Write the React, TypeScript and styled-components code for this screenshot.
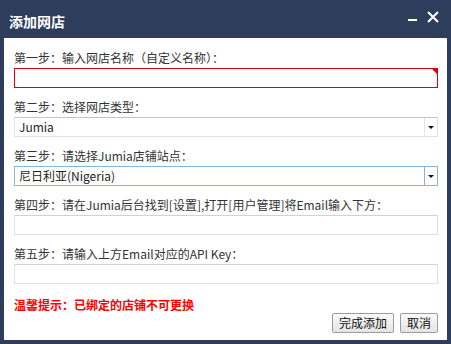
import React from 'react';
import styled, { createGlobalStyle } from 'styled-components';

const GlobalStyle = createGlobalStyle`
  html, body {
    margin: 0;
    padding: 0;
    background: #ffffff;
  }
  body {
    font-family: "Noto Sans CJK SC", "Noto Sans", sans-serif;
  }
`;

const Dialog = styled.div`
  width: 451px;
  height: 344px;
  box-sizing: border-box;
  background: #2e3d5b;
  padding: 0 4px 4px 4px;
  display: flex;
  flex-direction: column;
`;

const TitleBar = styled.div`
  height: 38px;
  display: flex;
  align-items: center;
  justify-content: space-between;
  padding: 0 8px 0 5px;
  color: #ffffff;
`;

const Title = styled.div`
  font-size: 14px;
  font-weight: bold;
  line-height: 18px;
  padding-top: 3px;
`;

const TitleTools = styled.div`
  display: flex;
  align-items: center;
  gap: 9px;
  margin-top: -4px;
`;

const ToolButton = styled.span`
  display: flex;
  align-items: center;
  justify-content: center;
  cursor: pointer;
`;

const Body = styled.div`
  flex: 1;
  background: #ffffff;
  padding: 11px 9px 0 10px;
  display: flex;
  flex-direction: column;
`;

const Field = styled.div`
  display: flex;
  flex-direction: column;
  margin-bottom: 10px;
`;

const Label = styled.div`
  font-size: 12px;
  line-height: 18px;
  color: #333333;
  margin-bottom: 1px;
`;

const TextBox = styled.div<{ $error?: boolean }>`
  position: relative;
  height: 20px;
  box-sizing: border-box;
  border: 1px solid ${({ $error }) => ($error ? '#d9000d' : '#dde1e6')};
  border-top-color: ${({ $error }) => ($error ? '#d9000d' : '#cfd3d8')};
  background: #ffffff;
`;

const ErrorMark = styled.span`
  position: absolute;
  top: 0;
  right: 0;
  width: 0;
  height: 0;
  border-style: solid;
  border-width: 0 5px 5px 0;
  border-color: transparent #e0000e transparent transparent;
`;

const Combo = styled.div<{ $active?: boolean }>`
  height: 20px;
  box-sizing: border-box;
  display: flex;
  border: 1px solid ${({ $active }) => ($active ? '#85b7d9' : '#dfe2e7')};
  border-top-color: ${({ $active }) => ($active ? '#85b7d9' : '#c4c4c4')};
  background: #ffffff;
`;

const ComboText = styled.div`
  flex: 1;
  font-size: 12px;
  line-height: 18px;
  color: #222222;
  padding-left: 4px;
`;

const ComboArrow = styled.div<{ $active?: boolean }>`
  width: 12px;
  border-left: 1px solid ${({ $active }) => ($active ? '#85b7d9' : '#e2e2e2')};
  display: flex;
  align-items: center;
  justify-content: center;

  &::after {
    content: '';
    width: 0;
    height: 0;
    border-style: solid;
    border-width: 3px 3px 0 3px;
    border-color: #111111 transparent transparent transparent;
  }
`;

const Warning = styled.div`
  font-size: 12px;
  font-weight: bold;
  line-height: 16px;
  color: #ff0000;
  padding-top: 3px;
`;

const Actions = styled.div`
  display: flex;
  justify-content: flex-end;
  gap: 6px;
`;

const Button = styled.button`
  height: 20px;
  box-sizing: border-box;
  padding: 0 6px;
  font-family: "Noto Sans CJK SC", "Noto Sans", sans-serif;
  font-size: 12px;
  line-height: 16px;
  color: #111111;
  border: 1px solid #9c9c9c;
  border-radius: 2px;
  background: linear-gradient(#fafafa, #e4e4e4);
  cursor: pointer;
`;

const MinimizeIcon = () => (
  <svg width="10" height="10" viewBox="0 0 10 10">
    <rect x="0" y="7" width="9" height="2" fill="#ffffff" />
  </svg>
);

const CloseIcon = () => (
  <svg width="12" height="12" viewBox="0 0 12 12">
    <path d="M1 1 L11 11 M11 1 L1 11" stroke="#ffffff" strokeWidth="2" />
  </svg>
);

const App: React.FC = () => {
  return (
    <>
      <GlobalStyle />
      <Dialog>
        <TitleBar>
          <Title>添加网店</Title>
          <TitleTools>
            <ToolButton><MinimizeIcon /></ToolButton>
            <ToolButton><CloseIcon /></ToolButton>
          </TitleTools>
        </TitleBar>
        <Body>
          <Field>
            <Label>第一步：输入网店名称（自定义名称）：</Label>
            <TextBox $error>
              <ErrorMark />
            </TextBox>
          </Field>
          <Field>
            <Label>第二步：选择网店类型：</Label>
            <Combo>
              <ComboText>Jumia</ComboText>
              <ComboArrow />
            </Combo>
          </Field>
          <Field>
            <Label>第三步：请选择Jumia店铺站点：</Label>
            <Combo $active>
              <ComboText>尼日利亚(Nigeria)</ComboText>
              <ComboArrow $active />
            </Combo>
          </Field>
          <Field>
            <Label>第四步：请在Jumia后台找到[设置],打开[用户管理]将Email输入下方：</Label>
            <TextBox />
          </Field>
          <Field>
            <Label>第五步：请输入上方Email对应的API Key：</Label>
            <TextBox />
          </Field>
          <Warning>温馨提示：已绑定的店铺不可更换</Warning>
          <Actions>
            <Button>完成添加</Button>
            <Button>取消</Button>
          </Actions>
        </Body>
      </Dialog>
    </>
  );
};

export default App;
